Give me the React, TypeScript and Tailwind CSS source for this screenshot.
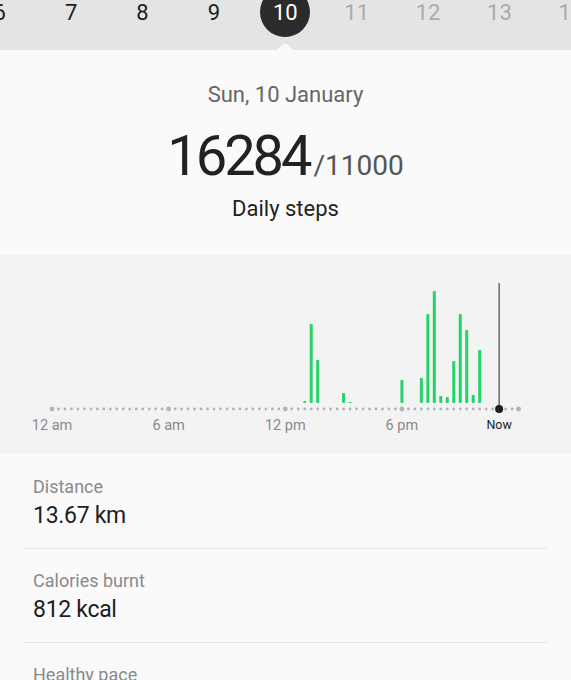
import React from "react";

const days = [6, 7, 8, 9, 10, 11, 12, 13, 14];

// bars on the 20-minute grid: [slot, top y within chart]
const bars: [number, number][] = [
  [39, 146],
  [40, 69],
  [41, 105],
  [45, 138],
  [46, 147],
  [54, 125],
  [57, 123],
  [58, 59],
  [59, 36],
  [60, 141],
  [61, 142],
  [62, 106],
  [63, 59],
  [64, 75],
  [65, 140],
  [66, 95],
];

const X0 = 52;
const STEP = 6.48;
const AXIS_Y = 154;
const BAR_BASE = 148;
const NOW = 69;

function DayStrip() {
  return (
    <div className="relative h-[50px] bg-[#e4e4e4] overflow-hidden">
      <div className="flex ml-[-36px]">
        {days.map((d) => (
          <div key={d} className="relative w-[71.4px] shrink-0 h-[26px] flex items-center justify-center">
            {d === 10 && (
              <div className="absolute left-1/2 -translate-x-1/2 top-[-13px] w-[50px] h-[50px] rounded-full bg-[#2b2b2b]" />
            )}
            <span
              className={`relative text-[22px] leading-none ${
                d === 10 ? "text-white" : d < 10 ? "text-[#1e1e1e]" : "text-[#ababab]"
              }`}
            >
              {d}
            </span>
          </div>
        ))}
      </div>
      <div className="absolute left-[276px] bottom-0 w-0 h-0 border-l-[9px] border-r-[9px] border-b-[7px] border-l-transparent border-r-transparent border-b-[#fafafa]" />
    </div>
  );
}

function StepChart() {
  const dots = [];
  for (let k = 0; k <= 72; k++) {
    const major = k % 18 === 0;
    dots.push(
      <circle key={k} cx={X0 + k * STEP} cy={AXIS_Y} r={major ? 2.4 : 1.4} fill="#b3b3b3" />
    );
  }
  const labels = [
    { k: 0, t: "12 am" },
    { k: 18, t: "6 am" },
    { k: 36, t: "12 pm" },
    { k: 54, t: "6 pm" },
  ];
  const nowX = X0 + NOW * STEP;
  return (
    <div className="bg-[#f3f3f3] h-[198px]">
      <svg width="571" height="198" viewBox="0 0 571 198">
        {dots}
        {bars.map(([k, top]) => (
          <rect
            key={k}
            x={X0 + k * STEP - 1.5}
            y={top}
            width={3}
            height={BAR_BASE - top}
            rx={0.8}
            fill="#25d36b"
          />
        ))}
        <line x1={nowX} y1={28} x2={nowX} y2={AXIS_Y} stroke="#555" strokeWidth={1.3} />
        <circle cx={nowX} cy={AXIS_Y} r={4} fill="#1e1e1e" />
        {labels.map((l) => (
          <text
            key={l.k}
            x={X0 + l.k * STEP}
            y={175}
            textAnchor="middle"
            fontSize={14.5}
            fill="#8a8a8a"
            fontFamily="Roboto, sans-serif"
          >
            {l.t}
          </text>
        ))}
        <text x={nowX} y={174} textAnchor="middle" fontSize={12.5} fill="#1e1e1e" fontFamily="Roboto, sans-serif">
          Now
        </text>
      </svg>
    </div>
  );
}

function StatRow({ label, value, last }: { label: string; value: string; last?: boolean }) {
  return (
    <div className={`mx-6 pl-[9px] pt-5 pb-[17px] ${last ? "" : "border-b border-[#e3e3e3]"}`}>
      <div className="text-[18px] leading-6 text-[#8a8a8a]">{label}</div>
      <div className="mt-[2px] text-[23px] leading-[30px] text-[#1e1e1e] tracking-[-0.3px]">{value}</div>
    </div>
  );
}

export default function App() {
  return (
    <div className="w-[571px] h-[680px] overflow-hidden bg-[#fafafa] font-['Roboto',sans-serif]">
      <DayStrip />

      {/* Daily summary */}
      <div className="flex flex-col items-center pt-[31px] pb-[32px]">
        <div className="text-[22px] leading-7 text-[#666]">Sun, 10 January</div>
        <div className="mt-[19px] flex items-baseline leading-none">
          <span className="text-[56px] leading-none text-[#222] tracking-[-3px]">16284</span>
          <span className="ml-[4px] text-[28px] leading-none text-[#555]">/11000</span>
        </div>
        <div className="mt-[11px] text-[22px] leading-7 text-[#222]">Daily steps</div>
      </div>

      <StepChart />

      <div className="pt-[2px]">
        <StatRow label="Distance" value="13.67 km" />
        <StatRow label="Calories burnt" value="812 kcal" />
        <StatRow label="Healthy pace" value="0 mins" last />
      </div>
    </div>
  );
}
